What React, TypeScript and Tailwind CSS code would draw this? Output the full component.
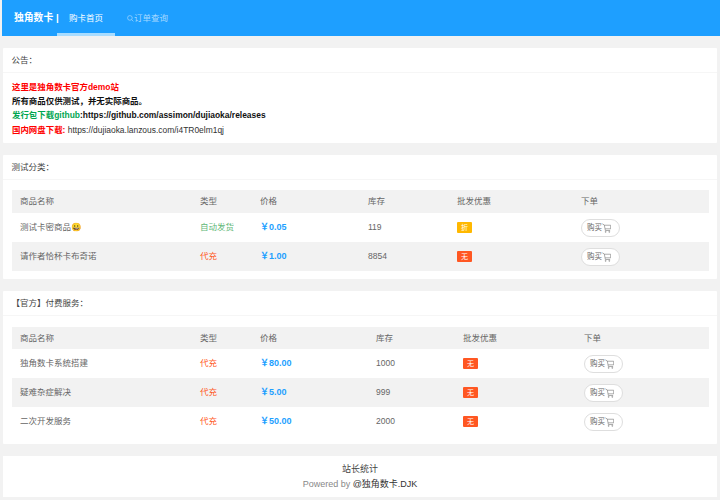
import React from "react";

function Cart() {
  return (
    <svg viewBox="0 0 16 18" className="w-[9px] h-[10px]" fill="none" stroke="#777" strokeWidth="1.1">
      <path d="M0.5 1.5L4 3.5L6 13.5H14.5M4.2 4H15.5V10.5H5.5" />
      <circle cx="6.5" cy="16" r="0.9" />
      <circle cx="13" cy="16" r="0.9" />
    </svg>
  );
}

function Badge({ k }: { k: "折" | "无" }) {
  return (
    <span className={`inline-flex items-center justify-center w-[15px] h-[11px] text-[7px] leading-none text-white rounded-[1px] ${k === "折" ? "bg-[#FFB800]" : "bg-[#FF5722]"}`}>
      {k}
    </span>
  );
}

function Buy() {
  return (
    <span className="inline-flex items-center justify-start pl-[5px] w-[39px] h-[18px] rounded-full border border-[#dedede] bg-white text-[7.5px] text-[#666] leading-none">
      购买<Cart />
    </span>
  );
}

type Row = [string, string, string, string, "折" | "无"];

function Table({ cols, rows, tall }: { cols: number[]; rows: Row[]; tall?: boolean }) {
  return (
    <table className="w-[697px] table-fixed border-collapse text-[8.5px] text-[#666]">
      <colgroup>
        {cols.map((w, i) => (
          <col key={i} style={{ width: w }} />
        ))}
      </colgroup>
      <thead>
        <tr className={`bg-[#f2f2f2] ${tall ? "h-[23px]" : "h-[22px]"}`}>
          {["商品名称", "类型", "价格", "库存", "批发优惠", "下单"].map((h, i) => (
            <th key={h} className={`font-normal text-left ${i === 0 ? "pl-[8px]" : "pl-0"} p-0`}>
              {h}
            </th>
          ))}
        </tr>
      </thead>
      <tbody>
        {rows.map((r, i) => (
          <tr key={r[0]} className={`h-[29px] ${i % 2 === 1 ? "bg-[#f2f2f2]" : "bg-white"}`}>
            <td className="pl-[8px] p-0">{r[0]}</td>
            <td className={`p-0 ${r[1] === "自动发货" ? "text-[#5FB878]" : "text-[#FF5722]"}`}>{r[1]}</td>
            <td className="p-0 text-[#1E9FFF] font-bold text-[9px]">{r[2]}</td>
            <td className="p-0">{r[3]}</td>
            <td className="p-0"><div className="flex items-center"><Badge k={r[4]} /></div></td>
            <td className="p-0"><div className="flex items-center"><Buy /></div></td>
          </tr>
        ))}
      </tbody>
    </table>
  );
}

function Card({ title, children }: { title: string; children: React.ReactNode }) {
  return (
    <section className="bg-white mx-[3px] mb-[12px] rounded-[1px]">
      <div className="h-[25px] px-[8.5px] flex items-center border-b border-[#f6f6f6] text-[8.5px] text-[#444]">{title}</div>
      {children}
    </section>
  );
}

export default function App() {
  return (
    <div className="w-[720px] h-[500px] overflow-hidden bg-[#f2f2f2]" style={{ fontFamily: '"Liberation Sans","Noto Sans CJK SC",sans-serif' }}>
      <header className="h-[36px] bg-[#1E9FFF] flex items-stretch ml-[2px] mb-[12px]">
        <div className="w-[55px] pl-[12px] flex items-center text-white text-[9.8px] font-bold whitespace-nowrap">独角数卡 |</div>
        <div className="w-[58px] flex items-center justify-center text-white text-[8.5px] border-b-[3px] border-[#a8dcff] pt-[3px]">购卡首页</div>
        <div className="ml-[12px] flex items-center text-[#a5d8ff] text-[8.5px]">
          <svg viewBox="0 0 12 12" className="w-[7px] h-[7px]" fill="none" stroke="#a5d8ff" strokeWidth="1.2">
            <circle cx="5" cy="5" r="4" /><path d="M8 8l3 3" />
          </svg>
          订单查询
        </div>
      </header>

      <Card title="公告：">
        <div className="px-[9px] pt-[6.5px] text-[8.45px] leading-[14.4px] font-bold h-[70px] text-[#111]">
          <div className="text-[#f00]">这里是独角数卡官方demo站</div>
          <div>所有商品仅供测试，并无实际商品。</div>
          <div><span className="text-[#00a650]">发行包下载github</span>:https://github.com/assimon/dujiaoka/releases</div>
          <div><span className="text-[#f00]">国内网盘下载:</span> <span className="font-normal text-[#333]">https://dujiaoka.lanzous.com/i4TR0elm1qj</span></div>
        </div>
      </Card>

      <Card title="测试分类：">
        <div className="pl-[9px] pt-[10px] pb-[8px]">
          <Table
            tall
            cols={[188, 60, 108, 89, 124, 128]}
            rows={[
              ["测试卡密商品😀", "自动发货", "￥0.05", "119", "折"],
              ["请作者恰杯卡布奇诺", "代充", "￥1.00", "8854", "无"],
            ]}
          />
        </div>
      </Card>

      <Card title="【官方】付费服务：">
        <div className="pl-[9px] pt-[11px] pb-[8px]">
          <Table
            cols={[188, 60, 116, 87, 121, 125]}
            rows={[
              ["独角数卡系统搭建", "代充", "￥80.00", "1000", "无"],
              ["疑难杂症解决", "代充", "￥5.00", "999", "无"],
              ["二次开发服务", "代充", "￥50.00", "2000", "无"],
            ]}
          />
        </div>
      </Card>

      <footer className="bg-white mx-[3px] h-[41px] flex flex-col items-center justify-center text-[9px] leading-[14.5px] text-[#444]">
        <div>站长统计</div>
        <div className="text-[#888]">Powered by <span className="text-[#333]">@独角数卡.DJK</span></div>
      </footer>
    </div>
  );
}
